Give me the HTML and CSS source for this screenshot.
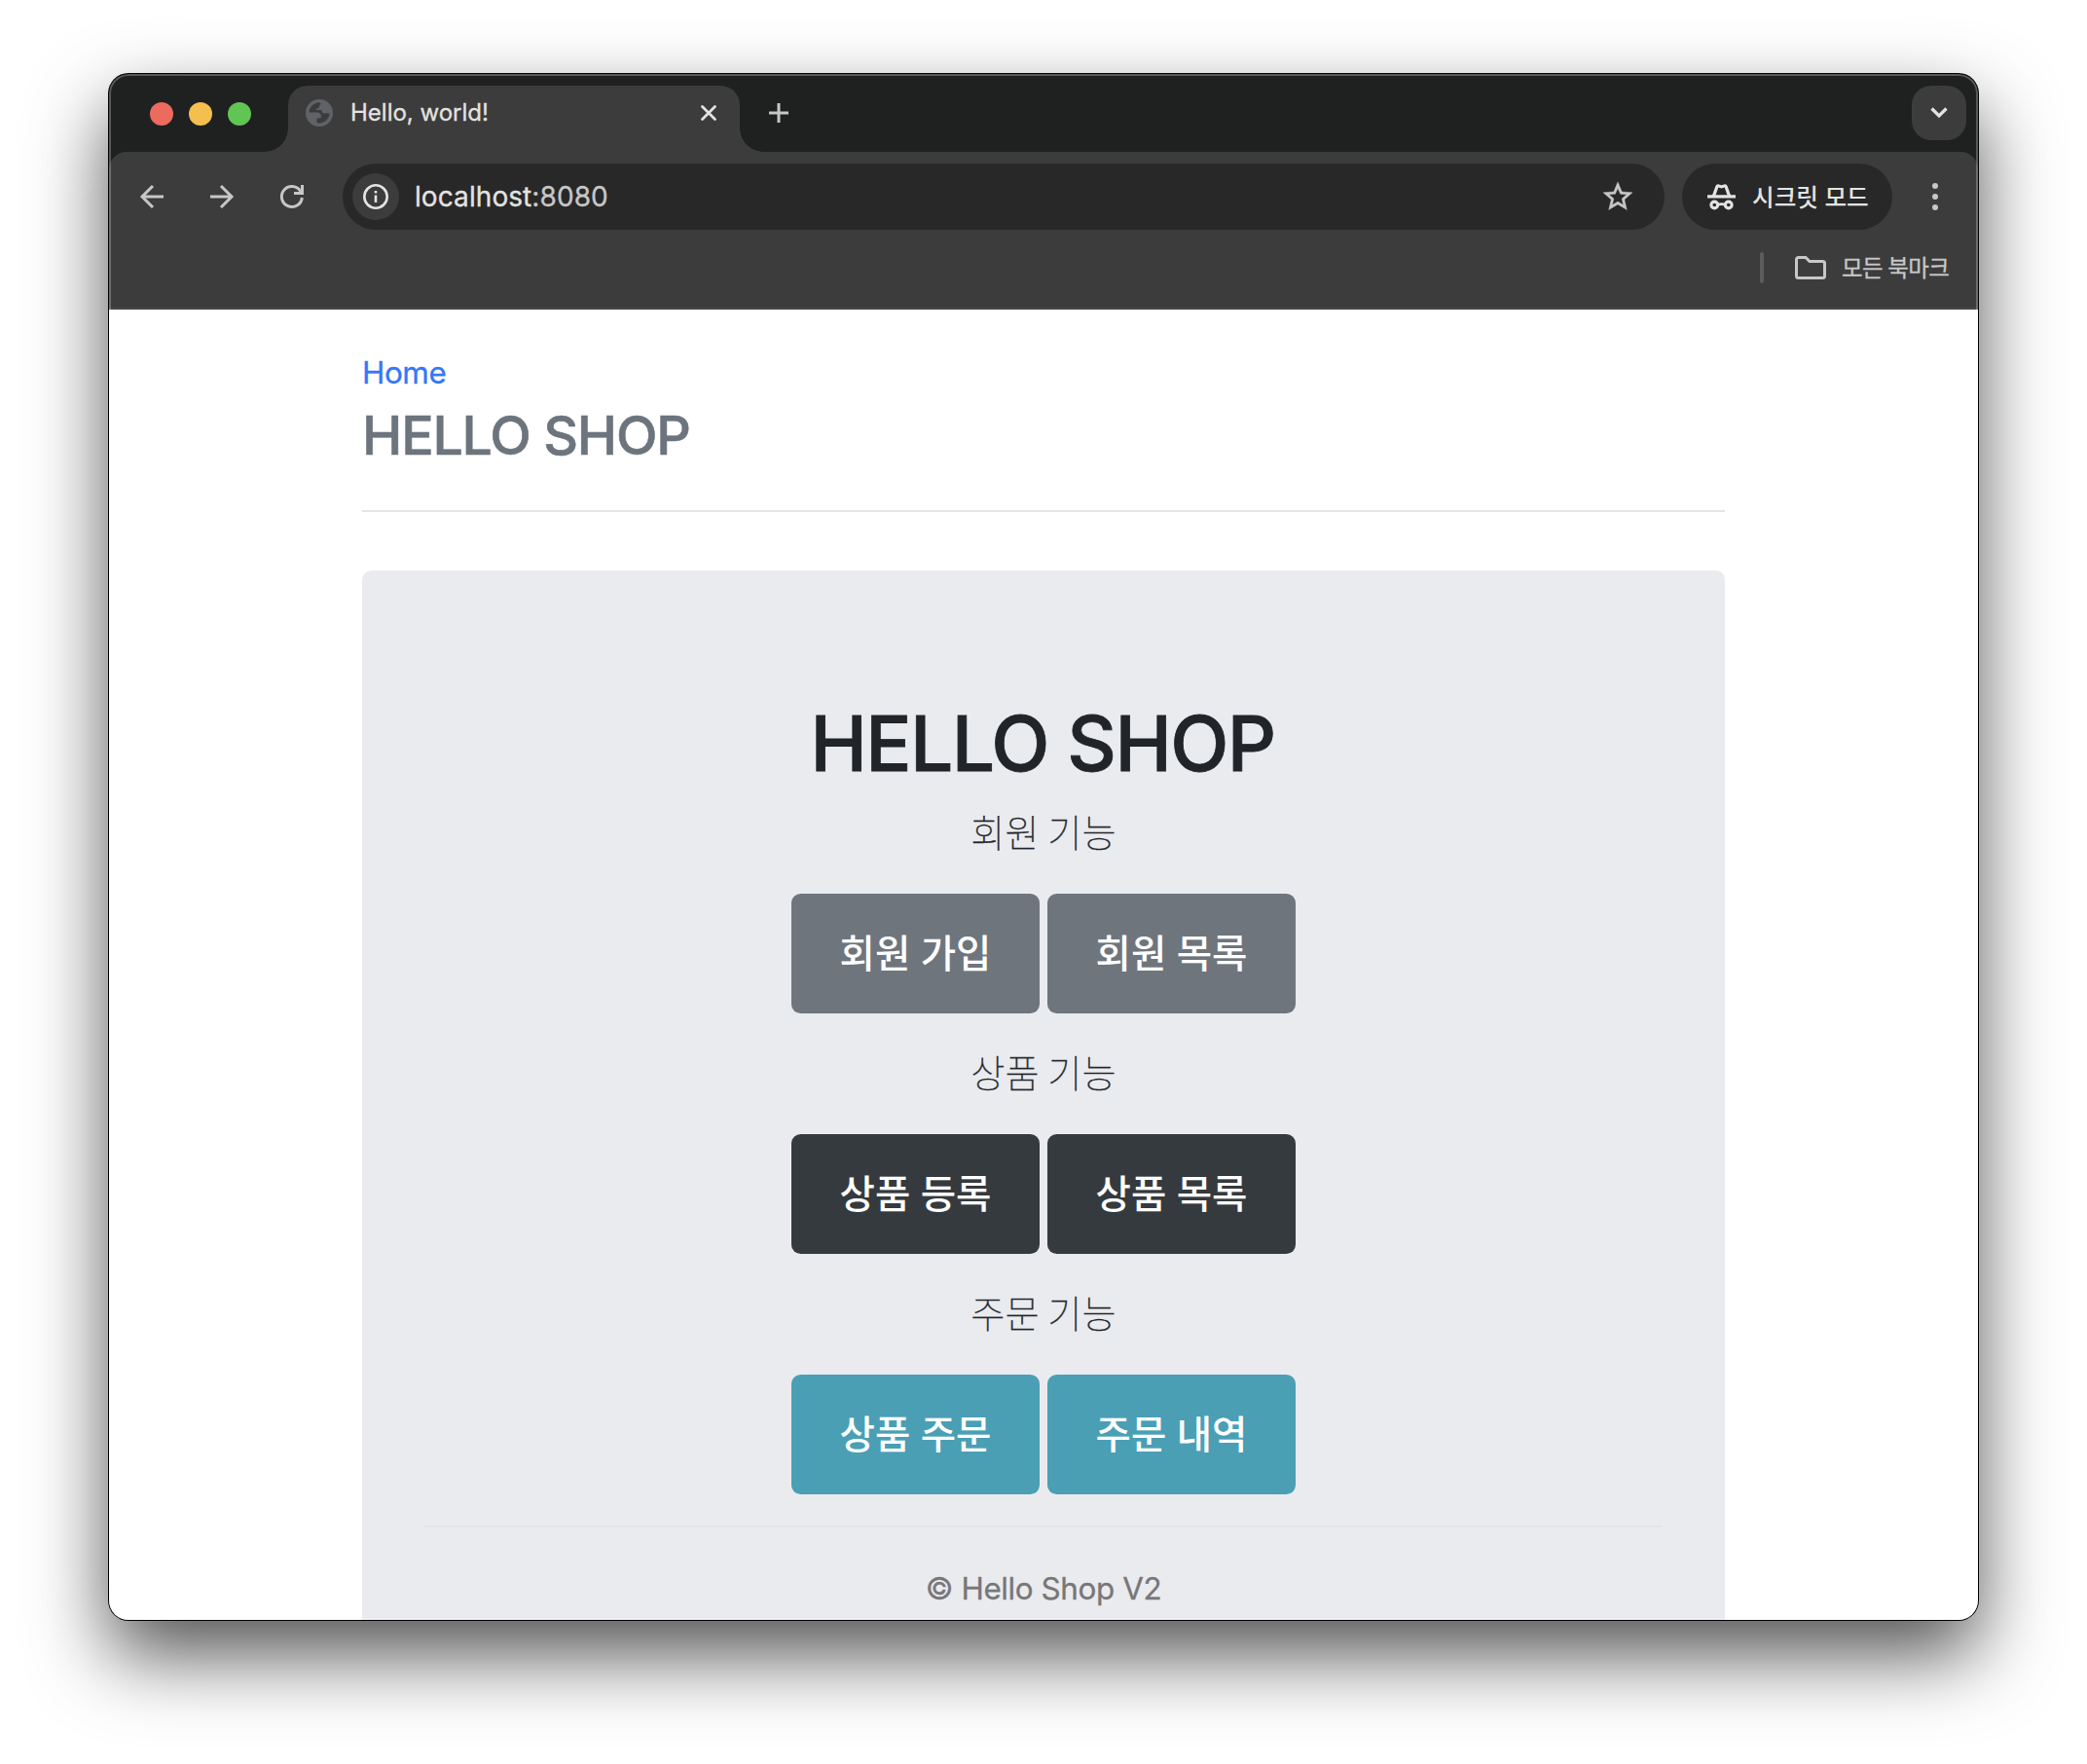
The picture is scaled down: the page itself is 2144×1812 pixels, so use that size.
FILE: index.html
```html
<!DOCTYPE html>
<html lang="ko">
<head>
<meta charset="utf-8">
<title>Hello, world!</title>
<link rel="stylesheet" href="styles.css">
</head>
<body>
<div class="window">
  <header class="tabstrip">
    <div class="lights"><i class="light red"></i><i class="light yellow"></i><i class="light green"></i></div>
    <div class="tab">
      <svg class="globe" viewBox="0 0 28 28"><circle cx="14" cy="14" r="14" fill="#5f6368"/><path d="M3.400 13.600C3.600 8 8.200 3.500 13.800 3.200c1.600 0 2.200 1.400 1.200 2.400-1 .9-1 1-1 2.200 0 1.200-1 1.700-2.200 1.700-.9 0-1.200.7-1 1.500h4.700c1 0 1.500.8 1.500 1.700 0 1 .6 1.500 1.600 1.500h4.100c1.200 0 1.900-.2 1.900.9-.5 5-4.900 9.200-10.100 9.400-1.700 0-3-.4-3.100-1.300v-2.400c0-1 .6-1.600 1.600-1.600h1.500c1 0 1.500-.6 1.500-1.500 0-3-2-4.200-4.600-4.200z" fill="#3c3c3c"/></svg>
      <span class="tab-title">Hello, world!</span>
      <svg class="close" viewBox="0 0 16 16"><path d="M1.500 1.500l13 13M14.500 1.500l-13 13"/></svg>
    </div>
    <svg class="plus" viewBox="0 0 20 20"><path d="M10 0v20M0 10h20"/></svg>
    <div class="tabsearch"><svg viewBox="0 0 18 12"><path d="M1.500 1.500L9 9l7.500-7.500"/></svg></div>
  </header>
  <div class="toolbar">
    <svg class="nav" viewBox="0 0 24 24"><path d="M24 12H2M13 1L2 12l11 11"/></svg>
    <svg class="nav" viewBox="0 0 24 24"><path d="M0 12h22M11 1l11 11-11 11"/></svg>
    <svg class="nav" viewBox="0 0 24 24"><path d="M22.300 13A10.500 10.500 0 1 1 20.500 6l2 2.500M22.500 0v8.500H14"/></svg>
    <div class="omnibox">
      <span class="info"><svg viewBox="0 0 26 26"><circle cx="13" cy="13" r="11.700"/><path d="M13 11.500v7.500M13 7v2.500"/></svg></span>
      <span class="url">localhost<span class="port">:8080</span></span>
      <svg class="star" viewBox="0 0 24 24"><path d="M22 9.240l-7.190-.62L12 2 9.190 8.630 2 9.240l5.460 4.730L5.820 21 12 17.270 18.180 21l-1.630-7.030L22 9.240zM12 15.400l-3.760 2.270 1-4.280-3.320-2.880 4.380-.38L12 6.100l1.710 4.040 4.380.38-3.320 2.880 1 4.280L12 15.400z"/></svg>
    </div>
    <div class="incognito">
      <svg viewBox="0 0 30 28"><path d="M0 11.600h30v3.400H0z"/><path d="M5 12.500L8.600 2.300Q9.700-.4 12.300.4L15 1.200l2.700-.8Q20.300-.4 21.400 2.300L25 12.500h-3.600L18.300 3.700 15 4.700l-3.300-1L8.600 12.500z"/><circle cx="7.500" cy="22.300" r="3.500"/><circle cx="22.500" cy="22.300" r="3.500"/><path class="bridge" d="M10.500 22.200q4.500-1.600 9 0"/></svg>
      <span class="incognito-label">시크릿 모드</span>
    </div>
    <div class="menu"><i></i><i></i><i></i></div>
  </div>
  <div class="bookmarks">
    <i class="divider"></i>
    <svg viewBox="0 0 32 24"><path d="M1.500 3.500a2 2 0 0 1 2-2h7.500l4 4h13.500a2 2 0 0 1 2 2v13a2 2 0 0 1-2 2h-25a2 2 0 0 1-2-2z"/></svg>
    <span class="bookmarks-label">모든 북마크</span>
  </div>
  <main class="page">
    <a class="home">Home</a>
    <h3 class="brand">HELLO SHOP</h3>
    <hr class="rule">
    <section class="jumbotron">
      <h1 class="title">HELLO SHOP</h1>
      <p class="lead">회원 기능</p>
      <div class="row"><a class="btn secondary">회원 가입</a><a class="btn secondary">회원 목록</a></div>
      <p class="lead">상품 기능</p>
      <div class="row"><a class="btn dark">상품 등록</a><a class="btn dark">상품 목록</a></div>
      <p class="lead">주문 기능</p>
      <div class="row"><a class="btn teal">상품 주문</a><a class="btn teal">주문 내역</a></div>
      <hr class="inner-rule">
      <p class="footer">© Hello Shop V2</p>
    </section>
  </main>
</div>
</body>
</html>
```
FILE: styles.css
```css
* { box-sizing: border-box; }
body {
  margin: 0;
  padding: 76px 112px 0;
  width: 2144px;
  height: 1812px;
  overflow: hidden;
  background: #fff;
  font-family: Inter, "Noto Sans CJK KR", sans-serif;
}
svg { display: block; fill: none; flex: none; overflow: visible; }
.window {
  position: relative;
  width: 1920px;
  height: 1588px;
  border-radius: 20px;
  overflow: hidden;
  background: #1f2120;
  box-shadow: 0 0 0 1px #000, 0 36px 80px rgba(0, 0, 0, .68);
}
.window::after {
  content: "";
  position: absolute;
  inset: 0;
  border-radius: 20px;
  box-shadow: inset 0 0 0 2px rgba(255, 255, 255, .25);
  pointer-events: none;
}
.tabstrip { display: flex; height: 80px; padding: 12px 12px 0 42px; }
.lights { display: flex; gap: 16px; padding-top: 17px; width: 142px; }
.light { width: 24px; height: 24px; border-radius: 50%; }
.red { background: #ed6a5e; }
.yellow { background: #f5bf4f; }
.green { background: #61c554; }
.tab {
  position: relative;
  display: flex;
  width: 464px;
  height: 68px;
  padding: 0 24px 12px 18px;
  align-items: center;
  border-radius: 20px 20px 0 0;
  background: #3c3c3c;
}
.tab::before, .tab::after {
  content: "";
  position: absolute;
  bottom: 0;
  width: 24px;
  height: 24px;
}
.tab::before { left: -24px; background: radial-gradient(circle at 0 0, transparent 23.5px, #3c3c3c 24px); }
.tab::after { right: -24px; background: radial-gradient(circle at 100% 0, transparent 23.5px, #3c3c3c 24px); }
.globe { width: 28px; height: 28px; }
.tab-title { margin: 0 0 2px 18px; font-size: 24px; color: #e3e3e3; -webkit-text-stroke: .3px #e3e3e3; white-space: nowrap; }
.close { width: 16px; height: 16px; margin-left: auto; stroke: #e3e3e3; stroke-width: 2.8; stroke-linecap: round; }
.plus { width: 20px; height: 20px; margin: 18px 0 0 30px; stroke: #c7c7c7; stroke-width: 3; }
.tabsearch {
  display: flex;
  align-items: center;
  justify-content: center;
  width: 56px;
  height: 56px;
  margin-left: auto;
  border-radius: 20px;
  background: #3c3c3c;
}
.tabsearch svg { width: 18px; height: 12px; stroke: #e3e3e3; stroke-width: 3.2; }
.toolbar {
  display: flex;
  align-items: center;
  height: 98px;
  padding: 0 41px 6px 32px;
  border-radius: 18px 18px 0 0;
  background: #3c3c3c;
}
.nav { width: 24px; height: 24px; margin-right: 48px; stroke: #c7c7c7; stroke-width: 3; }
.nav:nth-of-type(3) { margin-right: 40px; }
.omnibox {
  display: flex;
  align-items: center;
  width: 1358px;
  height: 68px;
  padding: 0 30px 0 10px;
  border-radius: 34px;
  background: #282828;
}
.info {
  display: flex;
  align-items: center;
  justify-content: center;
  width: 48px;
  height: 48px;
  border-radius: 50%;
  background: #3c3c3c;
}
.info svg { width: 26px; height: 26px; stroke: #e3e3e3; stroke-width: 2.6; }
.url { margin-left: 16px; font-size: 28px; letter-spacing: .08px; color: #e3e3e3; -webkit-text-stroke: .3px currentColor; }
.port { color: #c7c7c7; }
.star { width: 36px; height: 36px; margin-left: auto; fill: #c7c7c7; stroke: #c7c7c7; stroke-width: .3; }
.incognito {
  display: flex;
  align-items: center;
  width: 216px;
  height: 68px;
  margin-left: 18px;
  padding-left: 26px;
  border-radius: 34px;
  background: #282828;
  color: #e3e3e3;
  font-size: 24.6px;
  font-weight: 500;
  white-space: nowrap;
}
.incognito svg { width: 29px; height: 27px; margin-right: 17px; fill: #e3e3e3; }
.incognito-label { padding-bottom: 2px; }
.incognito circle { fill: none; stroke: #e3e3e3; stroke-width: 3.2; }
.incognito .bridge { fill: none; stroke: #e3e3e3; stroke-width: 3; }
.menu { display: flex; flex-direction: column; gap: 5px; margin-left: auto; }
.menu i { width: 6px; height: 6px; border-radius: 50%; background: #c7c7c7; }
.bookmarks {
  display: flex;
  align-items: center;
  justify-content: flex-end;
  height: 64px;
  padding: 0 29px 20px 0;
  border-bottom: 2px solid #474747;
  background: #3c3c3c;
  color: #c7c7c7;
}
.bookmarks-label { width: 111px; padding-bottom: 2px; font-size: 23.5px; letter-spacing: -.6px; word-spacing: -.8px; -webkit-text-stroke: .3px #c7c7c7; white-space: nowrap; }
.divider { width: 4px; height: 32px; border-radius: 2px; background: #5c5c5c; }
.bookmarks svg { width: 32px; height: 24px; margin: 0 16px 0 32px; stroke: #c7c7c7; stroke-width: 3; }
.page { height: 1346px; padding: 41px 260px 0; overflow: hidden; background: #fff; }
.home { display: block; height: 48px; font-size: 31.4px; letter-spacing: -.4px; line-height: 48px; color: #3478f6; -webkit-text-stroke: .3px #3478f6; }
.brand { margin: 6px 0 0; height: 67px; font-size: 55.5px; letter-spacing: -1.2px; line-height: 67px; font-weight: 500; color: #6c757d; -webkit-text-stroke: .6px #6c757d; }
.rule { margin: 44px 0 60px; border: 0; border-top: 2px solid #e5e5e5; }
.jumbotron { height: 1200px; padding: 130px 64px; border-radius: 9.6px; background: #eaebef; text-align: center; }
.title { margin: 0 2px 14px 0; font-size: 78.5px; letter-spacing: -1.6px; line-height: 96px; font-weight: 500; color: #212529; -webkit-text-stroke: .8px #212529; }
.lead { margin: 0 0 32px; height: 60px; font-size: 38.2px; line-height: 60px; word-spacing: -2px; font-weight: 100; -webkit-text-stroke: .4px #212529; color: #212529; }
.row { display: flex; justify-content: center; gap: 8px; margin-bottom: 32px; }
.btn { flex: none; width: 255px; height: 123px; border-radius: 9.6px; color: #fff; font-size: 39.5px; line-height: 125px; font-weight: 500; }
.secondary { background: #6e757d; }
.dark { background: #353a3e; }
.teal { background: #4a9fb5; }
.inner-rule { margin: 0 0 39px; border: 0; border-top: 2px solid #e4e6e6; }
.footer { margin: 0; font-size: 31.4px; letter-spacing: -.4px; line-height: 48px; color: #777; -webkit-text-stroke: .3px #777; }
```
